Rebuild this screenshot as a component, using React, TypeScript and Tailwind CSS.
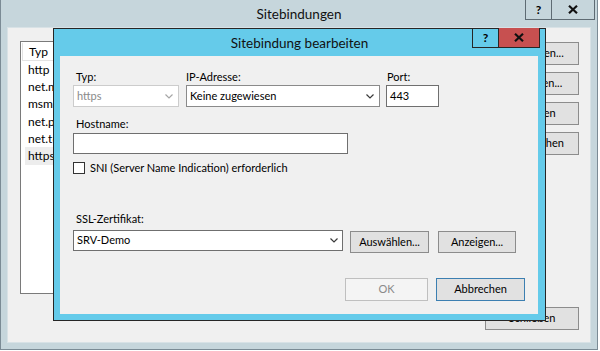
import type { ReactNode } from 'react';

const listItems = ['http', 'net.msmq', 'msmq.formatname', 'net.pipe', 'net.tcp', 'https'];
const sideButtons = ['Hinzufügen...', 'Bearbeiten...', 'Entfernen', 'Durchsuchen'];

function Chevron({ disabled = false }: { disabled?: boolean }) {
    return (
        <svg width="8" height="5" viewBox="0 0 8 5" className="shrink-0">
            <polyline
                points="0.5,0.5 4,4 7.5,0.5"
                fill="none"
                stroke={disabled ? '#a6a6a6' : '#3a3a3a'}
                strokeWidth="1.2"
            />
        </svg>
    );
}

function CloseGlyph() {
    return (
        <svg width="10" height="9" viewBox="0 0 10 9">
            <path d="M1 0.8 L9 8.2 M9 0.8 L1 8.2" stroke="#111" strokeWidth="2.2" />
        </svg>
    );
}

function Button({ children, className = '' }: { children: ReactNode; className?: string }) {
    return (
        <div className={`flex items-center justify-center border border-[#8c8c8c] bg-[#e1e1e1] ${className}`}>
            {children}
        </div>
    );
}

function SiteBindings() {
    return (
        <div className="flex h-[350px] w-[598px] flex-col border-x border-b border-[#7b8b95] bg-[#c6d6dc]">
            <div className="grid h-[27px] shrink-0 grid-cols-[1fr_auto_1fr]">
                <div />
                <div className="self-center text-[13.5px] leading-[20px] text-[#111]">Sitebindungen</div>
                <div className="flex justify-end self-start pr-[2px]">
                    <div className="flex h-[20px] w-[27px] items-center justify-center border-x border-b border-[#5e6b73] text-[12px] font-bold">?</div>
                    <div className="flex h-[20px] w-[43px] items-center justify-center border-r border-b border-[#5e6b73]">
                        <CloseGlyph />
                    </div>
                </div>
            </div>
            <div className="mx-[6px] mb-[6px] flex flex-1 border border-[#d8e2e6] bg-[#f0f0f0] pt-[13px] pl-[12px] pr-[11px] pb-[12px]">
                <div className="h-[253px] w-[451px] border border-[#7a7a7a] bg-white">
                    <div className="mx-[1px] mt-[1px] flex h-[18px] items-center border-x border-b border-[#e3e3e3] pl-[6px] text-[12px]">Typ</div>
                    {listItems.map((item, i) => (
                        <div
                            key={item}
                            className={`ml-[4px] flex h-[17.3px] items-center pl-[3px] text-[12px] ${i === listItems.length - 1 ? 'bg-[#ededed]' : ''}`}
                        >
                            {item}
                        </div>
                    ))}
                </div>
                <div className="ml-auto flex flex-col pt-[1px]">
                    <div className="flex flex-col gap-[7px]">
                        {sideButtons.map((label) => (
                            <Button key={label} className="h-[23px] w-[94px]">
                                {label}
                            </Button>
                        ))}
                    </div>
                    <Button className="mt-auto h-[23px] w-[94px]">Schließen</Button>
                </div>
            </div>
        </div>
    );
}

function EditBinding() {
    return (
        <div className="absolute left-[53px] top-[28px] flex h-[293px] w-[493px] flex-col border border-[#262626] bg-[#65cbea]">
            <div className="grid h-[27px] shrink-0 grid-cols-[1fr_auto_1fr]">
                <div />
                <div className="self-center text-[13.5px] leading-[20px] text-[#111]">Sitebindung bearbeiten</div>
                <div className="-mt-[1px] flex justify-end self-start pr-[5px]">
                    <div className="flex h-[20px] w-[26px] items-center justify-center border-l border-b border-[#262626] text-[12px] font-bold">?</div>
                    <div className="flex h-[20px] w-[42px] items-center justify-center border-x border-b border-[#262626] bg-[#c75050]">
                        <CloseGlyph />
                    </div>
                </div>
            </div>
            <div className="ml-[6px] mr-[7px] mb-[6px] flex flex-1 flex-col bg-[#f0f0f0] pt-[13px] pl-[13px]">
                <div className="flex">
                    <div className="w-[106px]">
                        <div className="h-[16px] pl-[3px] leading-[16px]">Typ:</div>
                        <div className="flex h-[22px] items-center justify-between border border-[#cccccc] bg-white pl-[3px] pr-[5px] text-[#8a8a8a]">
                            https
                            <Chevron disabled />
                        </div>
                    </div>
                    <div className="ml-[7px] w-[194px]">
                        <div className="h-[16px] leading-[16px]">IP-Adresse:</div>
                        <div className="flex h-[22px] items-center justify-between border border-[#8a8a8a] bg-white pl-[3px] pr-[5px]">
                            Keine zugewiesen
                            <Chevron />
                        </div>
                    </div>
                    <div className="ml-[6px] w-[53px]">
                        <div className="h-[16px] pl-[1px] leading-[16px]">Port:</div>
                        <div className="flex h-[22px] items-center border border-[#6f6f6f] bg-white pl-[3px]">443</div>
                    </div>
                </div>

                <div className="mt-[9px] h-[16px] pl-[3px] leading-[16px]">Hostname:</div>
                <div className="mt-[1px] h-[21px] w-[275px] border border-[#6f6f6f] bg-white" />

                <div className="mt-[6px] flex h-[16px] items-center">
                    <div className="h-[12px] w-[12px] border border-[#333] bg-white" />
                    <span className="ml-[5px] leading-[16px]">SNI (Server Name Indication) erforderlich</span>
                </div>

                <div className="mt-[35px] h-[16px] pl-[3px] leading-[16px]">SSL-Zertifikat:</div>
                <div className="mt-[3px] flex items-start">
                    <div className="flex h-[21px] w-[270px] items-center justify-between border border-[#6f6f6f] bg-white pl-[3px] pr-[4px]">
                        SRV-Demo
                        <Chevron />
                    </div>
                    <Button className="ml-[7px] mt-[1px] h-[22px] w-[79px]">Auswählen...</Button>
                    <Button className="ml-[9px] mt-[1px] h-[22px] w-[78px]">Anzeigen...</Button>
                </div>

                <div className="mt-[25px] flex justify-end gap-[8px] pr-[13px]">
                    <div className="flex h-[23px] w-[83px] items-center justify-center border border-[#bfbfbf] bg-[#f4f4f4] text-[#8a8a8a]">
                        OK
                    </div>
                    <div className="flex h-[23px] w-[89px] items-center justify-center border border-[#3c7fb1] bg-[#e1e1e1]">
                        Abbrechen
                    </div>
                </div>
            </div>
        </div>
    );
}

export default function App() {
    return (
        <div className="relative h-[351px] w-[600px] overflow-hidden bg-white font-['Lato',sans-serif] text-[11px] text-black">
            <SiteBindings />
            <EditBinding />
        </div>
    );
}
